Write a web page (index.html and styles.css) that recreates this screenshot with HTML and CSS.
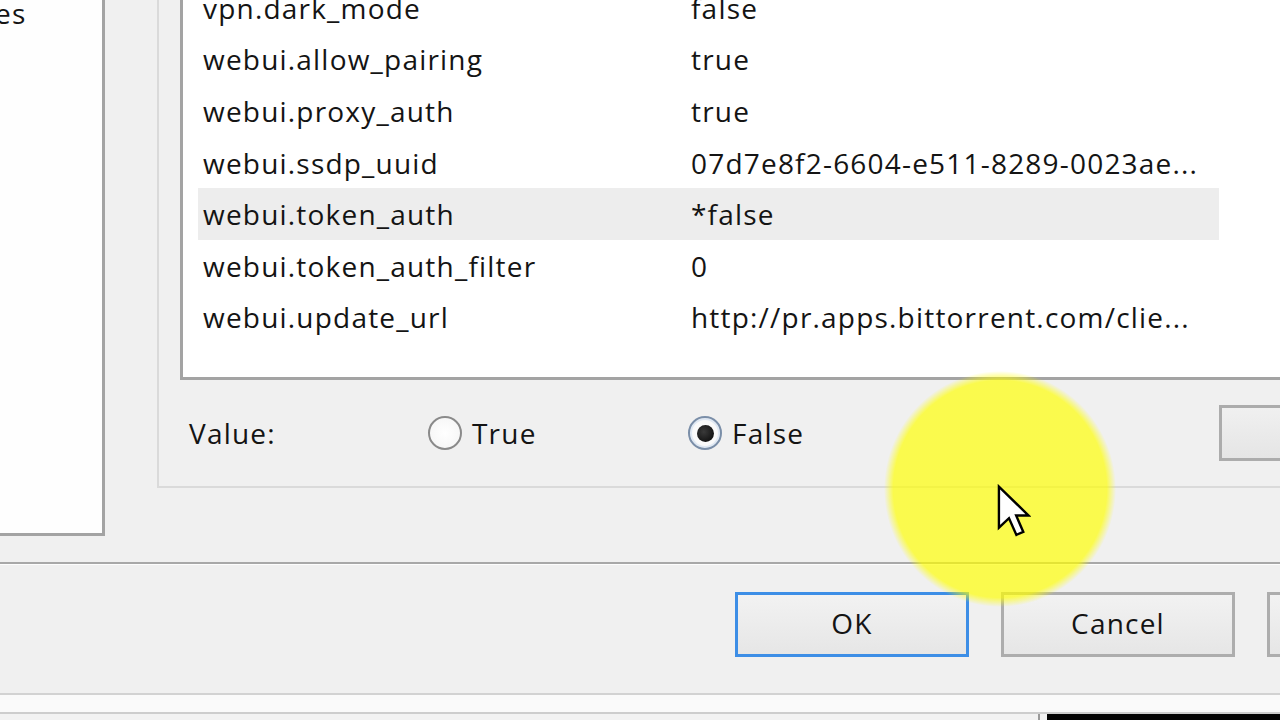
FILE: index.html
```html
<!DOCTYPE html>
<html lang="en">
<head>
<meta charset="utf-8">
<title>Advanced settings</title>
<link rel="stylesheet" href="styles.css">
</head>
<body>
<div class="screen">
  <div class="top">
    <aside class="tree">
      <div class="tree-item">es</div>
    </aside>
    <section class="group">
      <div class="list">
        <div class="rows">
          <div class="row"><span class="k">vpn.dark_mode</span><span class="v">false</span></div>
          <div class="row"><span class="k">webui.allow_pairing</span><span class="v">true</span></div>
          <div class="row"><span class="k">webui.proxy_auth</span><span class="v">true</span></div>
          <div class="row"><span class="k">webui.ssdp_uuid</span><span class="v">07d7e8f2-6604-e511-8289-0023ae...</span></div>
          <div class="row selected"><span class="k">webui.token_auth</span><span class="v">*false</span></div>
          <div class="row"><span class="k">webui.token_auth_filter</span><span class="v">0</span></div>
          <div class="row"><span class="k">webui.update_url</span><span class="v">http://pr.apps.bittorrent.com/clie...</span></div>
        </div>
      </div>
      <div class="value-row">
        <span class="label">Value:</span>
        <label class="radio"><span class="circle"></span><span>True</span></label>
        <label class="radio checked"><span class="circle"></span><span>False</span></label>
        <span class="set-btn"></span>
      </div>
    </section>
  </div>
  <div class="sep"></div>
  <div class="buttons">
    <button class="btn default">OK</button>
    <button class="btn">Cancel</button>
    <button class="btn"></button>
  </div>
  <div class="footer">
    <div class="strip"></div>
    <div class="taskbar"><div class="dark-edge"></div><div class="dark"></div></div>
  </div>
</div>
<div class="spot"></div>
<svg class="cursor" viewBox="0 0 13 20" width="35" height="53" aria-hidden="true">
  <path d="M1 1 L1 16.5 L4.8 12.9 L7.6 19.2 L10.2 18.1 L7.5 11.9 L12.2 11.9 Z" fill="#fff" stroke="#000" stroke-width="0.9" stroke-linejoin="miter"/>
</svg>
</body>
</html>
```

FILE: styles.css
```css
html, body {
  margin: 0;
  padding: 0;
}
body {
  width: 1280px;
  height: 720px;
  overflow: hidden;
  background: #f0f0f0;
  font-family: "Open Sans", "Noto Sans", sans-serif;
  font-size: 28px;
  letter-spacing: 1.2px;
  color: #141414;
  position: relative;
}
.screen {
  display: flex;
  flex-direction: column;
  width: 1280px;
  height: 720px;
}
.top {
  display: flex;
  height: 562px;
  flex: none;
}
.tree {
  width: 102px;
  height: 533px;
  flex: none;
  background: #fefefe;
  border-right: 3px solid #a3a3a3;
  border-bottom: 3px solid #a3a3a3;
  overflow: hidden;
}
.tree-item {
  margin-left: -5px;
  margin-top: -5px;
  line-height: 36px;
}
.group {
  margin-left: 52px;
  width: 1200px;
  height: 486px;
  flex: none;
  border-left: 2px solid #dadada;
  border-bottom: 2px solid #dadada;
  display: flex;
  flex-direction: column;
  padding-left: 21px;
}
.list {
  height: 377px;
  flex: none;
  background: #fff;
  border-left: 3px solid #a3a3a3;
  border-bottom: 3px solid #a3a3a3;
  overflow: hidden;
}
.rows {
  margin-top: -18px;
  margin-left: 15px;
  width: 1021px;
}
.row {
  display: flex;
  height: 51.6px;
  align-items: center;
  padding-left: 5px;
  white-space: nowrap;
}
.row.selected {
  background: #ededed;
}
.k {
  width: 488px;
  flex: none;
}
.v {
  flex: none;
}
.value-row {
  flex: 1;
  display: grid;
  grid-template-columns: 239px 260px 531px 100px;
  align-items: center;
  padding-left: 9px;
}
.radio {
  display: flex;
  align-items: center;
  gap: 10px;
}
.circle {
  width: 30px;
  height: 30px;
  border-radius: 50%;
  border: 2.5px solid #8a8a8a;
  background: radial-gradient(circle, #ffffff 0%, #f4f4f4 100%);
  display: flex;
  align-items: center;
  justify-content: center;
  flex: none;
}
.checked .circle {
  border-color: #7a8ea8;
  box-shadow: inset 0 0 0 2px #dfe8f3;
}
.checked .circle::after {
  content: "";
  width: 17px;
  height: 17px;
  border-radius: 50%;
  background: radial-gradient(circle at 40% 40%, #3a3a3a, #050505);
}
.set-btn {
  height: 50px;
  border: 3px solid #acacac;
  border-right: none;
  background: linear-gradient(#f0f0f0, #e5e5e5);
}
.sep {
  height: 1px;
  border-top: 2px solid #a8a8a8;
  background: #fdfdfd;
  flex: none;
}
.buttons {
  height: 128px;
  flex: none;
  display: flex;
  align-items: flex-start;
  gap: 32px;
  padding-left: 735px;
  padding-top: 27px;
  box-sizing: border-box;
}
.btn {
  width: 234px;
  height: 65px;
  flex: none;
  font: inherit;
  letter-spacing: inherit;
  color: #141414;
  border: 3px solid #adadad;
  background: linear-gradient(#f2f2f2, #e6e6e6);
  padding: 0;
  padding-bottom: 4px;
}
.btn.default {
  border-color: #3d8ee6;
}
.footer {
  flex: 1;
  display: flex;
  flex-direction: column;
  border-top: 2px solid #d2d2d2;
}
.strip {
  height: 17px;
  background: #fafafa;
  border-bottom: 2px solid #cdcdcd;
}
.taskbar {
  flex: 1;
  display: flex;
  padding-left: 1038px;
  background: #f2f2f2;
}
.dark-edge {
  width: 2px;
  background: #9a9a9a;
  margin-right: 7px;
}
.dark {
  flex: 1;
  background: #050505;
}
.spot {
  position: absolute;
  left: 884px;
  top: 371px;
  width: 232px;
  height: 236px;
  border-radius: 50%;
  background: radial-gradient(closest-side, rgba(255, 255, 0, 0.68) 92%, rgba(255, 255, 0, 0) 100%);
  pointer-events: none;
}
.cursor {
  position: absolute;
  left: 996px;
  top: 484px;
}
```
